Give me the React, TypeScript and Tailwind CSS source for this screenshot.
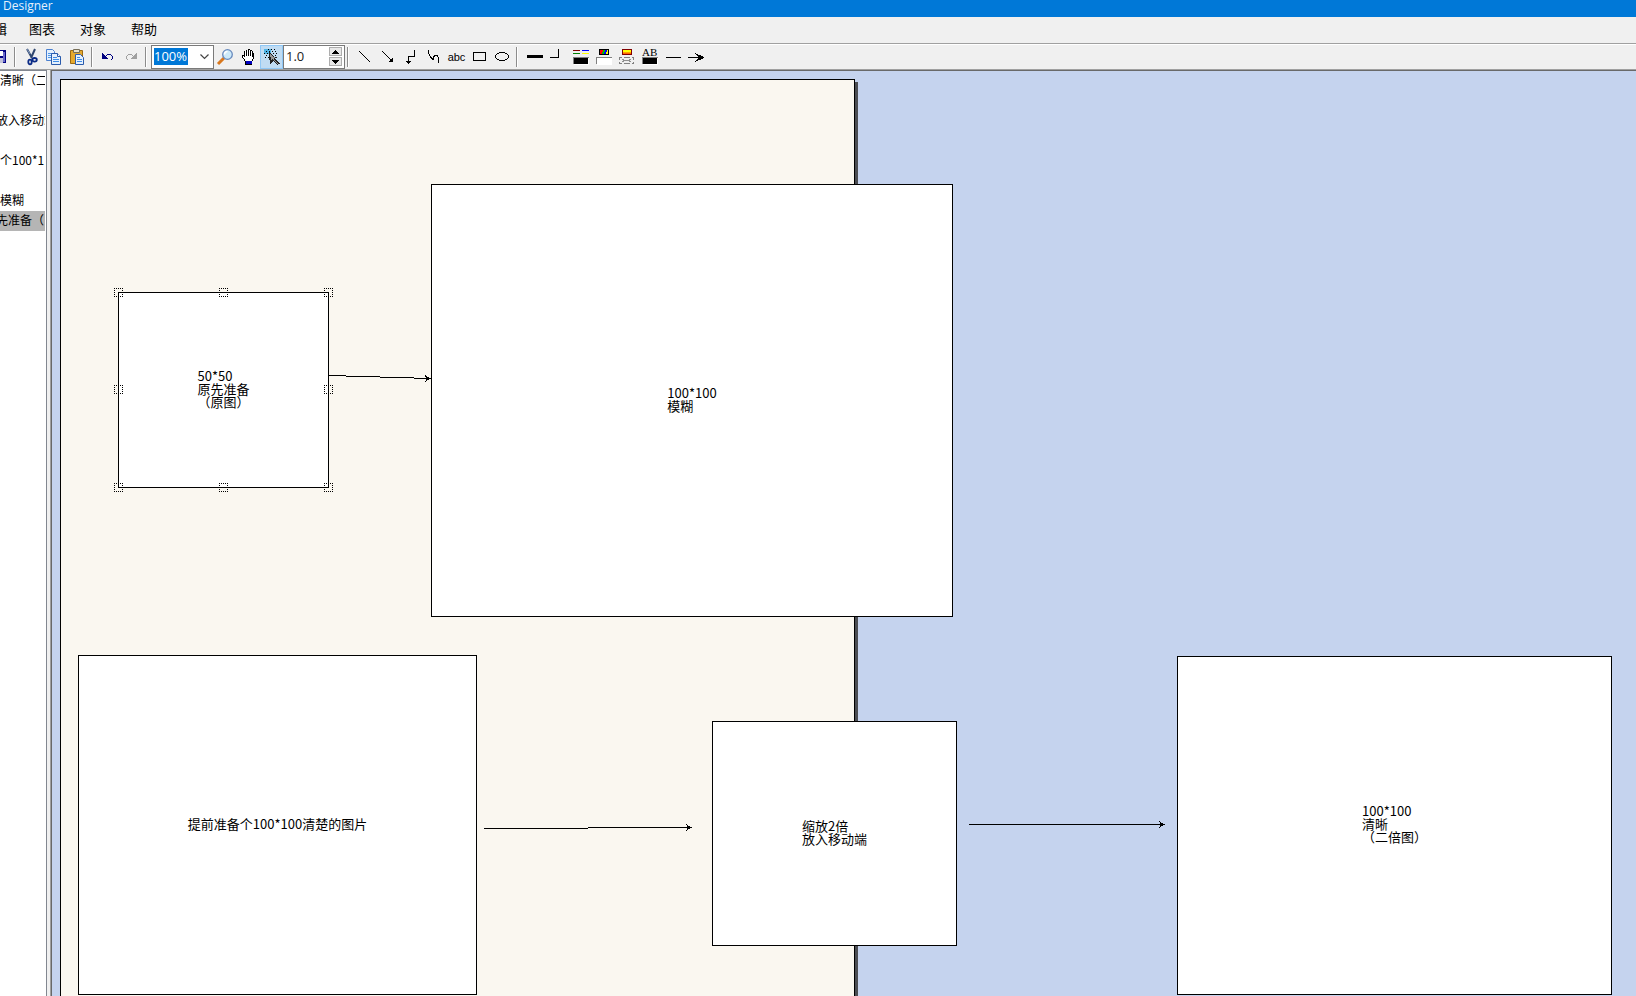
import type { ReactNode } from "react";

const menus = ["图表", "对象", "帮助"];

const outline = [
  { text: "清晰（二", style: "" },
  { text: "", style: "" },
  { text: "放入移动端", style: "-indent-1" },
  { text: "", style: "" },
  { text: "个100*1", style: "" },
  { text: "", style: "" },
  { text: "模糊", style: "" },
  { text: "先准备（", style: "-indent-1 bg-[#b5b5b5]" },
];

const nodes = [
  { lines: ["50*50", "原先准备", "（原图）"], box: "left-[66px] top-[221px] w-[211px] h-[196px]", selected: true },
  { lines: ["100*100", "模糊"], box: "left-[379px] top-[113px] w-[522px] h-[433px]" },
  { lines: ["提前准备个100*100清楚的图片"], box: "left-[26px] top-[584px] w-[399px] h-[340px]" },
  { lines: ["缩放2倍", "放入移动端"], box: "left-[660px] top-[650px] w-[245px] h-[225px]" },
  { lines: ["100*100", "清晰", "（二倍图）"], box: "left-[1125px] top-[585px] w-[435px] h-[339px]" },
];

const handles = [
  "-left-[5px] -top-[5px]",
  "left-[100px] -top-[5px]",
  "-right-[5px] -top-[5px]",
  "-left-[5px] top-[92px]",
  "-right-[5px] top-[92px]",
  "-left-[5px] -bottom-[5px]",
  "left-[100px] -bottom-[5px]",
  "-right-[5px] -bottom-[5px]",
];

function Tool({ label, active, children }: { label: string; active?: boolean; children: ReactNode }) {
  return (
    <button
      type="button"
      aria-label={label}
      className={
        active
          ? "flex h-6 w-[23px] shrink-0 items-center justify-center bg-[#c0dcf3] outline outline-1 -outline-offset-1 outline-[#90c8f6]"
          : "flex h-6 w-[23px] shrink-0 items-center justify-center"
      }
    >
      {children}
    </button>
  );
}

function Icon({ children, smooth }: { children: ReactNode; smooth?: boolean }) {
  return (
    <svg width="23" height="24" viewBox="0 0 23 24" fill="none" stroke="none" shapeRendering={smooth ? "auto" : "crispEdges"} aria-hidden="true">
      {children}
    </svg>
  );
}

function Separator() {
  return <div className="ml-0.5 mr-1 h-5 w-0.5 shrink-0 border-l border-r border-l-[#8c8c8c] border-r-white" />;
}

function Toolbar() {
  return (
    <div className="flex h-[26px] shrink-0 items-center overflow-hidden border-t border-[#a0a0a0] bg-[#f0f0f0] shadow-[inset_0_1px_0_#fff]">
      <div className="-ml-[11px] flex">
        <Tool label="保存">
          <Icon>
            <path d="M3 5h13l1 1v12H3z" fill="#000080" />
            <path d="M5 6h9v5H5z" fill="#fff" />
            <path d="M14 7h2v10h-2z" fill="#6a6ac8" />
            <path d="M6 13h8v5H6z" fill="#c0c0d8" />
          </Icon>
        </Tool>
      </div>
      <Separator />
      <Tool label="剪切">
        <Icon smooth>
          <path d="M7 4l5 9M15 4l-4 9" stroke="#30476f" strokeWidth="2" />
          <path d="M7 4l3 5" stroke="#7c93b8" strokeWidth="1" />
          <ellipse cx="10" cy="17" rx="1.7" ry="2.3" stroke="#0a2a86" strokeWidth="1.8" />
          <ellipse cx="14.6" cy="14.8" rx="2.2" ry="1.8" stroke="#0a2a86" strokeWidth="1.8" />
        </Icon>
      </Tool>
      <Tool label="复制">
        <Icon smooth>
          <path d="M3.500 4.500h6l2 2v9h-8z" fill="#e4f0fd" stroke="#4a80cf" />
          <path d="M5 8.500h5M5 10.500h5M5 12.500h5" stroke="#4f98ea" />
          <path d="M8.500 8.500h6l3 3v8h-9z" fill="#e4f0fd" stroke="#2a5bac" />
          <path d="M14.500 8.500v3h3" fill="#fff" stroke="#2a5bac" />
          <path d="M10 12.500h4M10 14.500h6M10 16.500h6" stroke="#3f8ce6" />
        </Icon>
      </Tool>
      <Tool label="粘贴">
        <Icon smooth>
          <path d="M4.500 5.500h12v13h-12z" fill="#e5a92d" stroke="#9a6a14" />
          <path d="M7.500 4.500h6v3h-6z" fill="#e8e2cc" stroke="#766e58" />
          <path d="M9.500 9.500h5l3 3v7h-8z" fill="#e4f0fd" stroke="#2a5bac" />
          <path d="M11 12.500h3M11 14.500h5M11 16.500h5" stroke="#3f8ce6" />
        </Icon>
      </Tool>
      <Separator />
      <Tool label="撤销">
        <Icon>
          <path d="M5 8v6h6v-1h-1v-1H9v-1H8v-1H7V9H6V8z" fill="#000080" />
          <path d="M9 10h1V9h4v1h1v1h1v3h-1v1h-1v-1h1v-3h-1v-1h-4v1H9z" fill="#000080" />
        </Icon>
      </Tool>
      <Tool label="重做">
        <Icon>
          <path d="M17 8v6h-6v-1h1v-1h1v-1h1v-1h1V9h1V8z" fill="#a0a0a0" />
          <path d="M13 10h-1V9H8v1H7v1H6v3h1v1h1v-1H7v-3h1v-1h4v1h1z" fill="#a0a0a0" />
        </Icon>
      </Tool>
      <Separator />
      <div className="flex h-6 w-[63px] shrink-0 items-center justify-between border border-[#7a7a7a] bg-white pl-0.5 pr-1">
        <select
          aria-label="缩放比例"
          defaultValue="100%"
          className="h-[17px] w-[34px] appearance-none bg-[#0078d7] font-[Open_Sans,sans-serif] text-[13px] leading-[17px] text-white"
        >
          <option>100%</option>
        </select>
        <svg width="9" height="6" viewBox="0 0 9 6" fill="none" aria-hidden="true">
          <path d="M.5.500l4 4 4-4" stroke="#444" strokeWidth="1.200" />
        </svg>
      </div>
      <Tool label="缩放">
        <Icon smooth>
          <path d="M4 19l6-6" stroke="#d9781e" strokeWidth="3" />
          <circle cx="13.500" cy="9.500" r="4.800" fill="#cdeafa" stroke="#6789bd" strokeWidth="1.300" />
          <path d="M10.500 9.500a3 3 0 013-3" stroke="#fff" strokeWidth="1.500" />
        </Icon>
      </Tool>
      <Tool label="平移">
        <Icon>
          <path d="M8 6h1V5h2V4h2v1h2v1h1v2h1v6h-1v2h-1v4H8v-4H7v-2H6v-1H5v-3h2V6z" fill="#000" />
          <path d="M8 6h1v5h1V5h1v6h1V5h1v6h1V6h1v6h1v2h-1v2H8v-2H7v-1H6v-2h1v1h1z" fill="#fff" />
          <path d="M9 16h6v3H9z" fill="#0000c0" />
        </Icon>
      </Tool>
      <Tool label="选择" active>
        <Icon>
          <path d="M4 4h7v5H4z" fill="#4fb4e8" />
          <path d="M8 4.500h8M6 6.500h10" stroke="#000" strokeDasharray="1 2" />
          <path d="M4 8.500h14M6 10.500h12M5 12.500h4" stroke="#000" strokeDasharray="1 2" />
          <path d="M9 7h1v1h1v1h1v1h1v1h1v1h3v1h-2v1h1v1h1v1h1v1h1v1h1v1h-2v1h-1v-1h-1v-1h-1v-1h-1v-1h-1v1h-1v1h-1v1h-1v-4H9z" fill="#222" />
          <path d="M10 9h1v1h1v1h1v1h2v1h-1v2h1v1h1v1h1v1h1v1h-1v-1h-1v-1h-1v-1h-1v-1h-1v-1h-1v1h-1v-3h-1z" fill="#999" />
        </Icon>
      </Tool>
      <div className="flex h-6 w-[62px] shrink-0 items-center border border-[#7a7a7a] bg-white pl-0.5 pr-0.5">
        <input
          aria-label="线宽"
          defaultValue="1.0"
          className="h-[18px] w-0 min-w-0 flex-1 bg-transparent font-[Open_Sans,sans-serif] text-[13px] text-[#222] outline-none"
        />
        <div className="flex flex-col gap-px">
          <button type="button" aria-label="增大" className="flex h-[9px] w-[13px] items-center justify-center border border-[#adadad] bg-[#e8e8e8]">
            <svg width="7" height="4" viewBox="0 0 7 4" shapeRendering="crispEdges" aria-hidden="true"><path d="M3 0h1v1h1v1h1v1h1v1H0V3h1V2h1V1h1z" /></svg>
          </button>
          <button type="button" aria-label="减小" className="flex h-[9px] w-[13px] items-center justify-center border border-[#adadad] bg-[#e8e8e8]">
            <svg width="7" height="4" viewBox="0 0 7 4" shapeRendering="crispEdges" aria-hidden="true"><path d="M0 0h7v1H6v1H5v1H4v1H3V3H2V2H1V1H0z" /></svg>
          </button>
        </div>
      </div>
      <Separator />
      <Tool label="直线">
        <Icon><path d="M6 6l11 11" stroke="#000" /></Icon>
      </Tool>
      <Tool label="箭头">
        <Icon>
          <path d="M6 6l10 10" stroke="#000" />
          <path d="M17 12v5h-5z" fill="#000" />
        </Icon>
      </Tool>
      <Tool label="折线">
        <Icon>
          <path d="M15.500 5v6.500h-6V17" stroke="#000" />
          <path d="M7 16h5l-2.500 3z" fill="#000" />
        </Icon>
      </Tool>
      <Tool label="曲线">
        <Icon><path d="M6.500 5v3l2 4 2 2h1V12l2-2h1l2 2.500V18" stroke="#000" /></Icon>
      </Tool>
      <Tool label="文本">
        <span className="font-[Liberation_Sans,sans-serif] text-[11px] leading-4">abc</span>
      </Tool>
      <Tool label="矩形">
        <Icon><path d="M5.500 7.500h12v8h-12z" stroke="#000" /></Icon>
      </Tool>
      <Tool label="椭圆">
        <Icon><ellipse cx="11" cy="11.500" rx="6.500" ry="4" stroke="#000" /></Icon>
      </Tool>
      <Separator />
      <Tool label="粗细">
        <Icon><path d="M5 10h16v3H5z" fill="#000" /></Icon>
      </Tool>
      <Tool label="拐角">
        <Icon><path d="M5 12.500h8.500V4" stroke="#000" /></Icon>
      </Tool>
      <Tool label="线条颜色">
        <Icon>
          <path d="M5 5h7v1H5z" fill="#800000" />
          <path d="M14 5h7v1h-7z" fill="#00f" />
          <path d="M5 8h7v1H5z" fill="#008000" />
          <path d="M14 8h7v1h-7z" fill="#ff0" />
          <path d="M5 12h16v7H5z" fill="#808080" />
          <path d="M6 13h15v7H6z" fill="#fff" />
          <path d="M6 13h14v6H6z" fill="#000" />
        </Icon>
      </Tool>
      <Tool label="填充颜色">
        <Icon>
          <path d="M8 4h10v6H8z" fill="#000" />
          <path d="M9 5h3v2h-1v2H9z" fill="#f00" />
          <path d="M12 5h2v2h-1v2h-2V7h1z" fill="#00c000" />
          <path d="M14 5h1v4h-2V7h1z" fill="#00f" />
          <path d="M15 5h2v4h-2z" fill="#ff0" />
          <path d="M15 5h1v2h-1z" fill="#00f" />
          <path d="M5 12h16v7H5z" fill="#808080" />
          <path d="M6 13h15v7H6z" fill="#fff" />
        </Icon>
      </Tool>
      <Tool label="渐变颜色">
        <Icon>
          <path d="M8 4h10v6H8z" fill="#800000" />
          <path d="M9 5h8v2H9z" fill="#ff0" />
          <path d="M9 7h8v1H9z" fill="#ffa000" />
          <path d="M9 8h8v1H9z" fill="#f60" />
          <path d="M5 12h3v1H6v2H5zM10 12h6v1h-6zM18 12h2v3h-1v-2h-1zM5 17h1v1h2v1H5zM10 18h6v1h-6zM19 17h1v2h-2v-1h1z" fill="#808080" />
          <path d="M8 14h2v1h5v-1h2v1h-1v1h1v1h-2v-1h-5v1H8v-1h1v-1H8z" fill="#909090" />
        </Icon>
      </Tool>
      <Tool label="文字颜色">
        <Icon>
          <text x="5" y="11" fill="#000" className="font-[Liberation_Serif,serif] text-[11px]">AB</text>
          <path d="M5 12h16v7H5z" fill="#808080" />
          <path d="M6 13h15v7H6z" fill="#fff" />
          <path d="M6 13h14v6H6z" fill="#000" />
        </Icon>
      </Tool>
      <Tool label="线型">
        <Icon><path d="M6 12h15v1H6z" fill="#000" /></Icon>
      </Tool>
      <Tool label="箭头样式">
        <Icon>
          <path d="M5 12h13v1H5z" fill="#000" />
          <path d="M12 8l9 4v1l-9 4 3-4v-1z" fill="#000" />
        </Icon>
      </Tool>
    </div>
  );
}

function Diagram() {
  return (
    <main className="relative min-w-0 flex-1 overflow-hidden border-l border-[#696969] bg-[#c5d3ee]">
      <div className="absolute -bottom-4 left-2 top-2 w-[795px] border border-black bg-[#faf7f0] shadow-[3px_3px_0_#4b4d52]" />
      {nodes.map((node) => (
        <div key={node.box} className={`absolute flex items-center justify-center border border-black bg-white pb-1 ${node.box}`}>
          <div className="whitespace-nowrap text-[13px] leading-[13px]">
            {node.lines.map((line) => (
              <p key={line}>{line}</p>
            ))}
          </div>
          {node.selected &&
            handles.map((place) => (
              <svg key={place} className={`absolute ${place}`} width="9" height="9" viewBox="0 0 9 9" fill="none" shapeRendering="crispEdges" aria-hidden="true">
                <path d="M0 .5h9M0 8.500h9M.5 0v9M8.500 0v9" stroke="#000" strokeDasharray="1 1" />
              </svg>
            ))}
        </div>
      ))}
      <svg className="absolute left-0 top-0" width="1584" height="925" viewBox="0 0 1584 925" fill="none" shapeRendering="crispEdges" aria-hidden="true">
        <path d="M277 304.500h17M294 305.500h34M328 306.500h34M362 307.500h17" stroke="#000" />
        <path d="M373 304h1v1h1v1h2v1h2v1h-2v1h-2v1h-1v1h-1v-1h1v-4h-1z" fill="#000" />
        <path d="M432 757.500h104M536 756.500h104" stroke="#000" />
        <path d="M634 753h1v1h1v1h2v1h2v1h-2v1h-2v1h-1v1h-1v-1h1v-5h-1z" fill="#000" />
        <path d="M917 753.500h194" stroke="#000" />
        <path d="M1107 750h1v1h1v1h2v1h2v1h-2v1h-2v1h-1v1h-1v-1h1v-5h-1z" fill="#000" />
      </svg>
    </main>
  );
}

export default function App() {
  return (
    <div className="flex h-screen flex-col overflow-hidden bg-[#f0f0f0] font-[Noto_Sans_CJK_SC,sans-serif] text-black">
      <header className="h-[17px] shrink-0 bg-[#0078d7] pl-[3px] font-[Open_Sans,sans-serif] text-[12px] leading-3 text-[#e6f1fb]">Designer</header>
      <nav className="flex h-[26px] shrink-0 items-center overflow-hidden pb-0.5 text-[13px] leading-5">
        <button type="button" className="-ml-1.5 mr-2.5">辑</button>
        {menus.map((menu) => (
          <button key={menu} type="button" className="pl-3 pr-[13px]">{menu}</button>
        ))}
      </nav>
      <Toolbar />
      <div className="flex min-h-0 flex-1 border-t border-[#a0a0a0]">
        <aside className="mr-[3px] w-[47px] shrink-0 overflow-hidden border-r border-t border-[#828790] bg-white pr-px">
          <ul className="text-[12px] leading-[18px]">
            {outline.map((row, i) => (
              <li key={i} className={`h-5 overflow-hidden whitespace-nowrap ${row.style}`}>{row.text}</li>
            ))}
          </ul>
        </aside>
        <div className="flex min-w-0 flex-1 border-l border-[#a0a0a0]">
          <div className="flex min-w-0 flex-1 border-t border-[#696969]">
            <Diagram />
          </div>
        </div>
      </div>
    </div>
  );
}
